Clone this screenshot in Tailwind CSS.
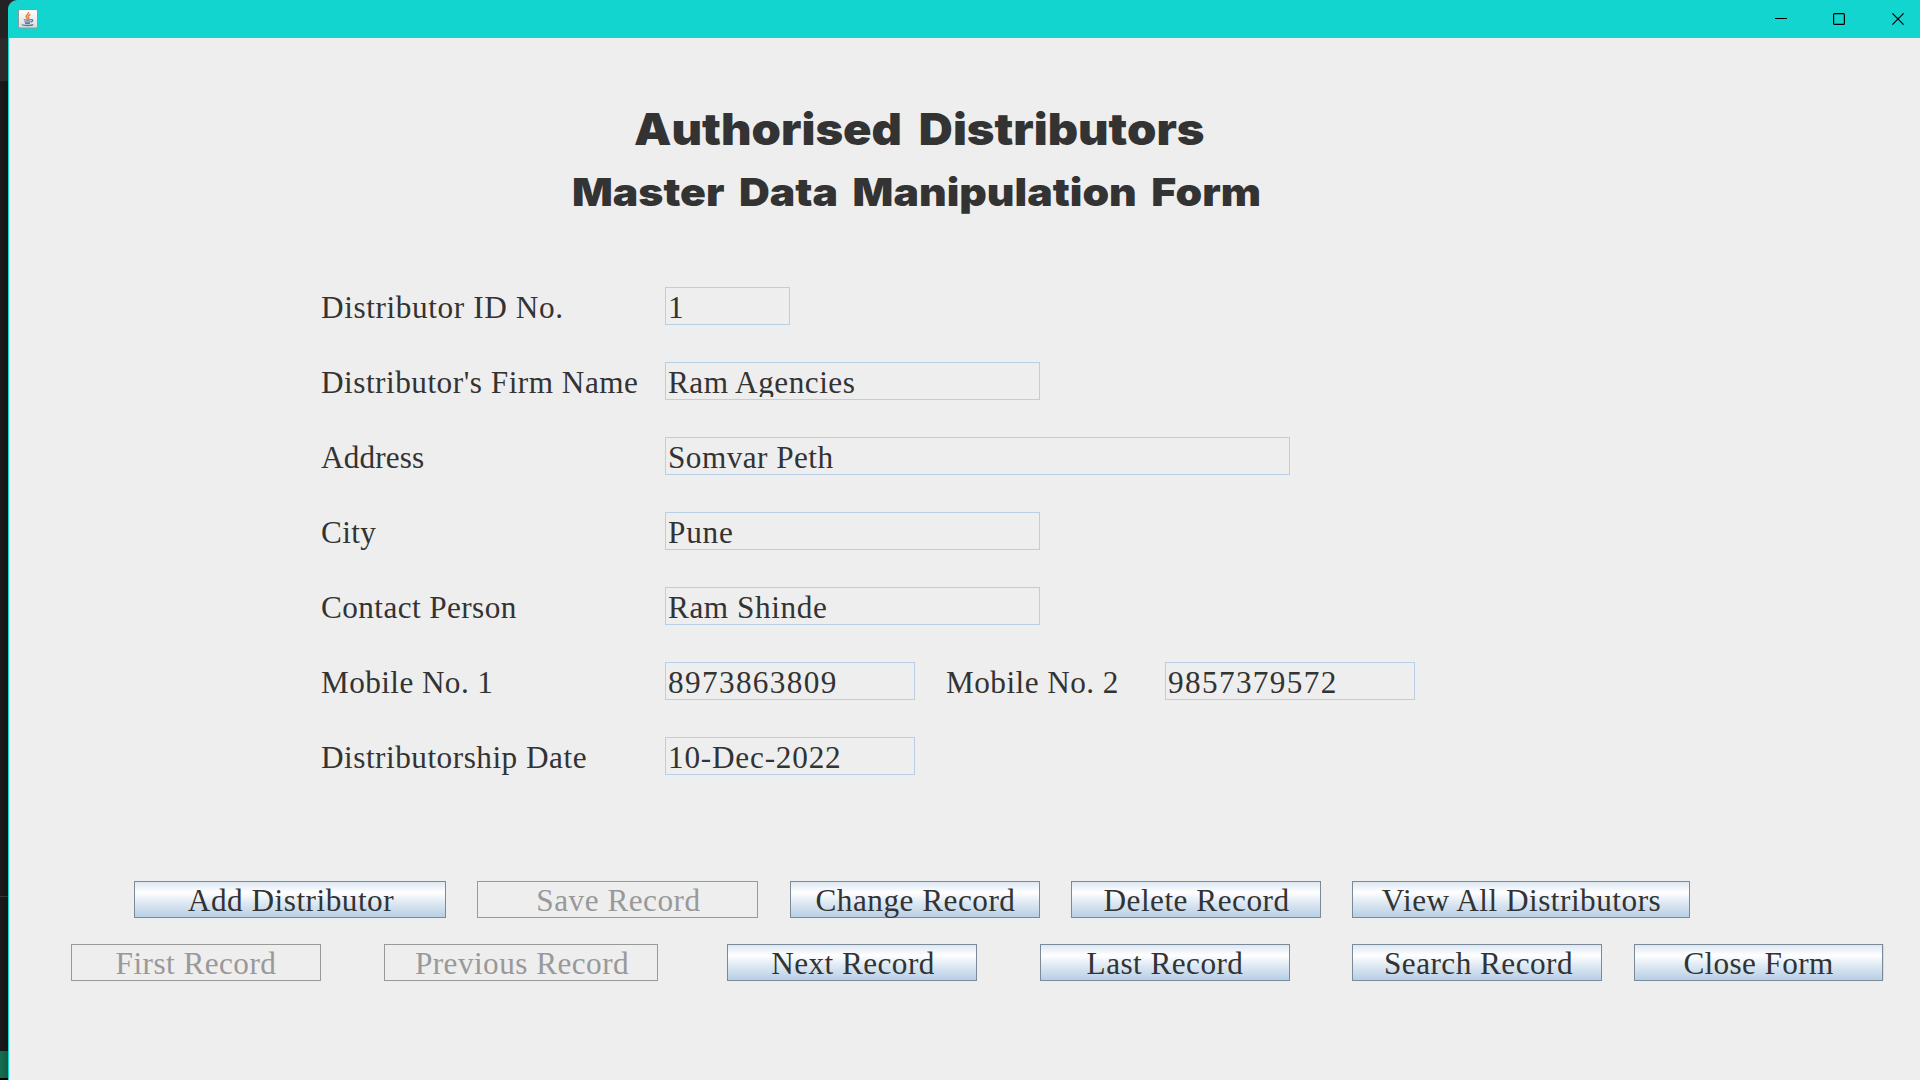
<!DOCTYPE html>
<html lang="en">
<head>
<meta charset="utf-8">
<title>Authorised Distributors</title>
<script src="https://cdn.jsdelivr.net/npm/@tailwindcss/browser@4"></script>
</head>
<body class="h-[1080px] w-[1920px] overflow-hidden bg-[#171717] flex text-[#333333] font-['Liberation_Serif',serif] text-[31.25px]">

<!-- desktop strip behind the window -->
<div class="w-2 shrink-0 flex flex-col bg-linear-to-r from-[#1a1a1a] to-[#141414]">
  <div class="h-[38px] bg-[#232323]"></div>
  <div class="h-[43px] bg-[#2b2b2b]"></div>
  <div class="h-[815px]"></div>
  <div class="h-px bg-[#353535]"></div>
  <div class="h-[154px]"></div>
  <div class="h-[27px] bg-linear-to-r from-[#176f50] to-[#125a40]"></div>
  <div class="h-[2px] bg-black"></div>
</div>

<div class="flex-1 bg-[#232323] flex flex-col">
  <header class="h-[38px] shrink-0 bg-[#13d5cf] rounded-tl-[9px] flex items-center pl-[10px] pr-4">
    <svg class="size-5 mt-[-1px]" viewBox="0 0 20 20">
      <defs><linearGradient id="tile" x1="0" y1="0" x2="0" y2="1"><stop offset="0" stop-color="#fff"/><stop offset="1" stop-color="#d9dde0"/></linearGradient></defs>
      <rect x=".5" y=".5" width="19" height="18.500" rx="1.500" fill="url(#tile)" stroke="#8b9a9c"/>
      <path d="M10.500 3c1 2-3.300 3-2.300 5 .4.900 1.200 1.300 1 2.300M12.500 5.500c-2.600 1.200-3 2-1.800 3.200.5.500.3 1.200-.3 1.700" fill="none" stroke="#e8853f" stroke-width="1.500"/>
      <path d="M5.800 10.500c2 .8 5.500.8 7.400 0M6.400 12.500c2 .7 4.400.7 6.200 0M7 14.200c1.700.5 3.600.5 5 0M13.200 10.700c2.300-.4 2 1.700-.2 2.300M4.300 15.300c-1 1.600 9.700 1.500 10.900.2" fill="none" stroke="#557b9e" stroke-width="1.300"/>
    </svg>
    <div class="ml-auto flex items-center gap-[46px] text-black">
      <svg class="size-3" viewBox="0 0 12 12"><path d="M0 5.500h12" stroke="currentColor"/></svg>
      <svg class="size-3" viewBox="0 0 12 12"><rect x=".6" y=".6" width="10.800" height="10.800" rx="1" fill="none" stroke="currentColor" stroke-width="1.200"/></svg>
      <svg class="size-3 ml-[1px]" viewBox="0 0 12 12"><path d="M.4.4l11.200 11.200M11.600.4L.4 11.600" stroke="currentColor" stroke-width="1.200"/></svg>
    </div>
  </header>

  <main class="flex-1 bg-[#eeeeee] border-l border-[#13d5cf]">
    <h1 class="mt-[65px] ml-[625px] w-[560px] h-[64px] leading-[53px] whitespace-nowrap origin-left scale-x-[1.07] font-['Inter',sans-serif] font-black text-[44px] [word-spacing:7px]">Authorised Distributors</h1>
    <h2 class="ml-[563px] w-[660px] h-[120px] leading-[50px] whitespace-nowrap origin-left scale-x-[1.095] font-['Inter',sans-serif] font-black text-[39px] [word-spacing:5.5px]">Master Data Manipulation Form</h2>

    <div class="pl-[312px] flex flex-col gap-[37px] leading-[38px] whitespace-nowrap">
      <div class="flex h-[38px]"><label class="w-[344px] pt-[2px] tracking-[0.6px]">Distributor ID No.</label><div class="w-[125px] h-[38px] border border-[#b8cfe5] px-[2px] leading-[40px]">1</div></div>
      <div class="flex h-[38px]"><label class="w-[344px] pt-[2px] tracking-[0.5px]">Distributor's Firm Name</label><div class="w-[375px] h-[38px] border border-[#b8cfe5] p-[2px]"><div class="h-8 overflow-hidden leading-[36px] tracking-[0.5px]">Ram Agencies</div></div></div>
      <div class="flex h-[38px]"><label class="w-[344px] pt-[2px] tracking-[0.12px]">Address</label><div class="w-[625px] h-[38px] border border-[#b8cfe5] px-[2px] leading-[40px] tracking-[0.45px]">Somvar Peth</div></div>
      <div class="flex h-[38px]"><label class="w-[344px] pt-[2px] tracking-[0.35px]">City</label><div class="w-[375px] h-[38px] border border-[#b8cfe5] px-[2px] leading-[40px] tracking-[0.8px]">Pune</div></div>
      <div class="flex h-[38px]"><label class="w-[344px] pt-[2px] tracking-[0.4px]">Contact Person</label><div class="w-[375px] h-[38px] border border-[#b8cfe5] px-[2px] leading-[40px] tracking-[0.57px]">Ram Shinde</div></div>
      <div class="flex h-[38px]"><label class="w-[344px] pt-[2px] tracking-[0.4px]">Mobile No. 1</label><div class="w-[250px] h-[38px] border border-[#b8cfe5] px-[2px] leading-[40px] tracking-[1.35px]">8973863809</div>
        <label class="ml-[31px] w-[219px] pt-[2px] tracking-[0.45px]">Mobile No. 2</label><div class="w-[250px] h-[38px] border border-[#b8cfe5] px-[2px] leading-[40px] tracking-[1.35px]">9857379572</div></div>
      <div class="flex h-[38px]"><label class="w-[344px] pt-[2px] tracking-[0.5px]">Distributorship Date</label><div class="w-[250px] h-[38px] border border-[#b8cfe5] px-[2px] leading-[40px] tracking-[0.78px]">10-Dec-2022</div></div>
    </div>

    <div class="mt-[106px] pl-[125px] flex leading-[37px] tracking-[0.5px] whitespace-nowrap">
      <button class="w-[312px] h-[37px] pl-[2px] border border-[#7a8a99] bg-linear-[180deg,#dde8f3,#ffffff_30%,#dde8f3_60%,#b8cfe5]">Add Distributor</button>
      <button disabled class="ml-[31px] w-[281px] h-[37px] pl-[2px] border border-[#999999] text-[#999999]">Save Record</button>
      <button class="ml-8 w-[250px] h-[37px] pl-[1px] border border-[#7a8a99] bg-linear-[180deg,#dde8f3,#ffffff_30%,#dde8f3_60%,#b8cfe5]">Change Record</button>
      <button class="ml-[31px] w-[250px] h-[37px] pl-[1px] border border-[#7a8a99] bg-linear-[180deg,#dde8f3,#ffffff_30%,#dde8f3_60%,#b8cfe5]">Delete Record</button>
      <button class="ml-[31px] w-[338px] h-[37px] pl-[1px] border border-[#7a8a99] bg-linear-[180deg,#dde8f3,#ffffff_30%,#dde8f3_60%,#b8cfe5]">View All Distributors</button>
    </div>
    <div class="mt-[26px] pl-[62px] flex leading-[37px] tracking-[0.45px] whitespace-nowrap">
      <button disabled class="w-[250px] h-[37px] border border-[#999999] text-[#999999]">First Record</button>
      <button disabled class="ml-[63px] w-[274px] h-[37px] pl-[2px] border border-[#999999] text-[#999999]">Previous Record</button>
      <button class="ml-[69px] w-[250px] h-[37px] pl-[2px] border border-[#7a8a99] bg-linear-[180deg,#dde8f3,#ffffff_30%,#dde8f3_60%,#b8cfe5]">Next Record</button>
      <button class="ml-[63px] w-[250px] h-[37px] border border-[#7a8a99] bg-linear-[180deg,#dde8f3,#ffffff_30%,#dde8f3_60%,#b8cfe5]">Last Record</button>
      <button class="ml-[62px] w-[250px] h-[37px] pl-[3px] border border-[#7a8a99] bg-linear-[180deg,#dde8f3,#ffffff_30%,#dde8f3_60%,#b8cfe5]">Search Record</button>
      <button class="ml-8 w-[249px] h-[37px] border border-[#7a8a99] bg-linear-[180deg,#dde8f3,#ffffff_30%,#dde8f3_60%,#b8cfe5] tracking-[0.35px]">Close Form</button>
      <span class="w-px h-9 bg-[#cfdcea]"></span>
    </div>
  </main>
</div>
</body>
</html>
